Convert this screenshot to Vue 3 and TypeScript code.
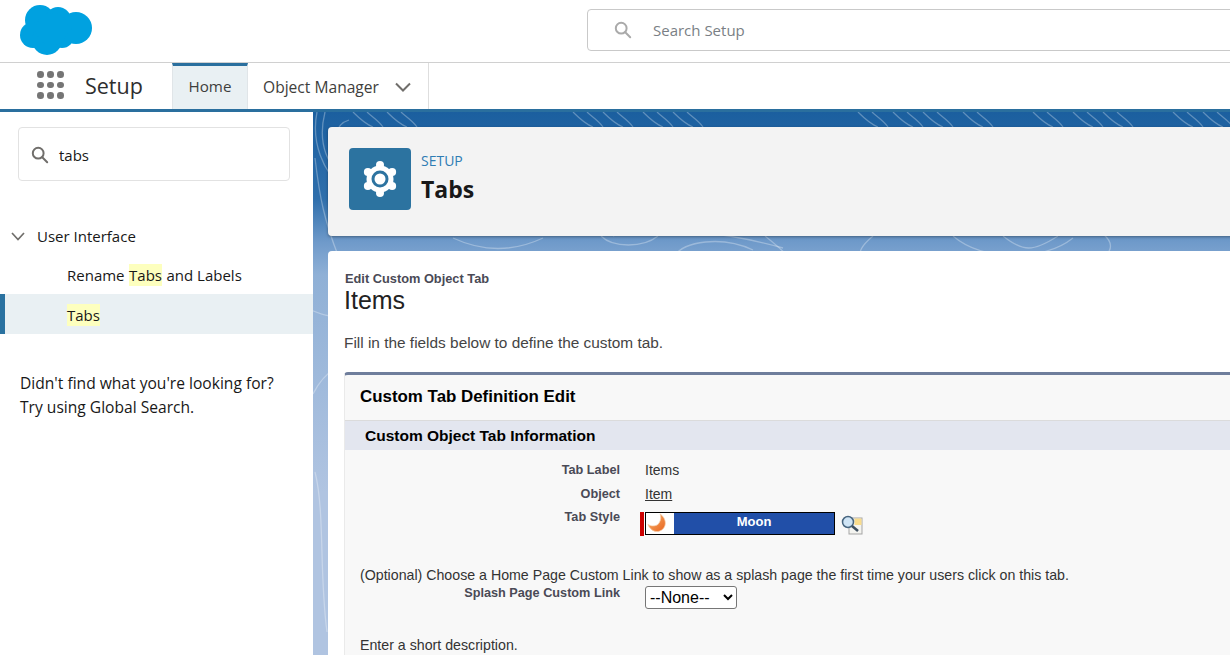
<template>
  <div class="page">
    <header class="topbar">
      <svg class="logo" viewBox="0 0 72 50" width="72" height="50" aria-label="Salesforce">
        <circle v-for="(c, i) in cloud" :key="i" :cx="c[0]" :cy="c[1]" :r="c[2]" fill="#00a1e0" />
      </svg>
      <div class="global-search">
        <svg viewBox="0 0 20 20" width="18" height="18" fill="none" stroke="#aaa" stroke-width="2.2">
          <circle cx="8" cy="8" r="6" />
          <path d="M12.5 12.5 18 18" stroke-linecap="round" />
        </svg>
        <span>Search Setup</span>
      </div>
    </header>

    <nav class="navbar">
      <div class="apps" aria-hidden="true">
        <span v-for="n in 9" :key="n"></span>
      </div>
      <div class="app-name">Setup</div>
      <div class="tab tab--active">Home</div>
      <div class="tab tab--menu">
        Object Manager
        <svg viewBox="0 0 16 10" width="16" height="10" fill="none" stroke="#706e6b" stroke-width="2">
          <path d="M1 1.5 8 8.5 15 1.5" />
        </svg>
      </div>
    </nav>

    <div class="body">
      <aside class="sidebar">
        <div class="quickfind">
          <svg viewBox="0 0 20 20" width="18" height="18" fill="none" stroke="#706e6b" stroke-width="2.2">
            <circle cx="8" cy="8" r="6" />
            <path d="M12.5 12.5 18 18" stroke-linecap="round" />
          </svg>
          <span>tabs</span>
        </div>
        <div class="tree-head">
          <svg viewBox="0 0 14 9" width="14" height="9" fill="none" stroke="#706e6b" stroke-width="1.7">
            <path d="M1 1 7 7.5 13 1" />
          </svg>
          User Interface
        </div>
        <div class="tree-item tree-item--plain">Rename <mark>Tabs</mark> and Labels</div>
        <div class="tree-item tree-item--active"><mark>Tabs</mark></div>
        <p class="hint">Didn't find what you're looking for?<br />Try using Global Search.</p>
      </aside>

      <main class="main">
        <svg class="topo" viewBox="0 0 917 544" width="917" height="544" fill="none" stroke="#fff" stroke-opacity=".3" stroke-width="1.3" aria-hidden="true">
          <path v-for="(d, i) in contours" :key="i" :d="d" />
        </svg>

        <section class="page-head">
          <div class="page-icon">
            <svg viewBox="0 0 36 36" width="36" height="36">
              <circle v-for="(t, i) in teeth" :key="i" :cx="t[0]" :cy="t[1]" r="4" fill="#fff" />
              <circle cx="18" cy="18" r="13.500" fill="#fff" />
              <circle cx="18" cy="18" r="8.500" fill="#2c73a0" />
              <circle cx="18" cy="18" r="5.500" fill="#fff" />
            </svg>
          </div>
          <div>
            <div class="crumb">SETUP</div>
            <h1 class="page-title">Tabs</h1>
          </div>
        </section>

        <section class="content">
          <div class="sub-title">Edit Custom Object Tab</div>
          <h2 class="item-title">Items</h2>
          <p class="intro">Fill in the fields below to define the custom tab.</p>

          <div class="block">
            <div class="block-title">Custom Tab Definition Edit</div>
            <div class="section-bar">Custom Object Tab Information</div>

            <div class="field field--first">
              <label>Tab Label</label>
              <div>Items</div>
            </div>
            <div class="field">
              <label>Object</label>
              <div><u>Item</u></div>
            </div>
            <div class="field field--style">
              <label>Tab Style</label>
              <div class="style-pick">
                <i class="required"></i>
                <div class="swatch">
                  <span class="swatch-icon">
                    <svg viewBox="0 0 24 24" width="21" height="21">
                      <defs>
                        <linearGradient id="moon" x1="0" y1="0" x2="1" y2="1">
                          <stop offset="0" stop-color="#f9b56e" />
                          <stop offset="1" stop-color="#e8641f" />
                        </linearGradient>
                      </defs>
                      <path d="M15 1C21 5 23 13 18.500 18 13 23.500 5 22 1 13 6 16 12 15 14 11 16 8 16 4 15 1Z" fill="url(#moon)" stroke="#f7cda8" stroke-width=".8" />
                    </svg>
                  </span>
                  <span class="swatch-name">Moon</span>
                </div>
                <svg class="lookup" viewBox="0 0 22 20" width="22" height="20">
                  <rect x="8" y="3" width="13" height="16" fill="#f4f4f0" stroke="#a5a5a5" />
                  <rect x="13.500" y="3.500" width="7" height="6.500" fill="#f9dc8c" />
                  <circle cx="7" cy="7" r="5.500" fill="#cfe4f5" stroke="#47657f" stroke-width="1.500" />
                  <path d="M11 11 17 16" stroke="#3e4f5f" stroke-width="2.500" />
                </svg>
              </div>
            </div>

            <p class="note note--splash">(Optional) Choose a Home Page Custom Link to show as a splash page the first time your users click on this tab.</p>
            <div class="field field--splash">
              <label>Splash Page Custom Link</label>
              <select class="splash-select">
                <option>--None--</option>
              </select>
            </div>
            <p class="note note--desc">Enter a short description.</p>
          </div>
        </section>
      </main>
    </div>
  </div>
</template>

<script setup lang="ts">
const cloud: [number, number, number][] = [
  [20, 15, 15],
  [38, 15, 13],
  [56, 23, 16],
  [13, 30, 13],
  [27, 35, 15],
  [42, 31, 12],
  [32, 24, 16],
]

const teeth = [0, 60, 120, 180, 240, 300].map((deg) => {
  const a = (deg * Math.PI) / 180
  return [18 + 14 * Math.sin(a), 18 - 14 * Math.cos(a)]
})

// hatch groups along the top strip, then the looser loops below the header card
const hatch = [40, 74, 260, 290, 330, 360, 545, 580, 610, 650, 720, 760, 790, 860, 890]
const contours = [
  ...hatch.map((x) => `M${x} 0C${x + 6} 6 ${x + 12} 12 ${x + 20} 15`),
  ...hatch.map((x) => `M${x + 30} 15C${x + 26} 9 ${x + 18} 4 ${x + 14} 0`),
  'M4 0C-2 30 10 60 30 76',
  'M12 0C6 24 10 44 24 60',
  'M36 8C22 12 18 30 26 44',
  'M2 46C6 80 10 110 32 160',
  'M-2 198C12 204 20 206 32 202',
  'M0 282C10 262 30 244 50 258 70 272 90 262 100 250',
  'M140 126C170 140 200 140 230 126',
  'M288 124C300 136 330 136 345 124',
  'M300 124C340 110 420 122 470 136',
  'M360 146C370 128 410 124 440 138',
  'M452 124C462 132 470 138 480 150',
  'M560 124C548 134 545 140 547 150',
  'M640 124C670 150 730 150 760 126',
  'M690 124C710 140 720 140 745 124',
  'M790 122C800 130 800 138 790 146',
  'M2 360C12 400 6 460 14 520',
]
</script>

<style>
html,
body {
  margin: 0;
  background: #fff;
}
</style>

<style scoped>
.page {
  width: 1230px;
  height: 655px;
  overflow: hidden;
  font-family: "Open Sans", "Noto Sans", sans-serif;
  color: #16325c;
  background: #fff;
}

.topbar {
  display: flex;
  align-items: flex-start;
  height: 62px;
  border-bottom: 1px solid #d0d0d0;
}

.logo {
  flex: none;
  margin: 5px 0 0 20px;
}

.global-search {
  flex: none;
  display: flex;
  align-items: center;
  gap: 21px;
  box-sizing: border-box;
  width: 800px;
  height: 42px;
  margin: 9px 0 0 495px;
  padding-left: 26px;
  border: 1px solid #c9c9c9;
  border-radius: 4px;
  color: #7a7f85;
  font-size: 15px;
}

.navbar {
  display: flex;
  align-items: stretch;
  box-sizing: border-box;
  height: 49px;
  border-bottom: 3px solid #2a6f9e;
}

.apps {
  flex: none;
  display: grid;
  grid-template-columns: repeat(3, 6px);
  gap: 4px;
  align-content: center;
  margin-left: 37px;
  margin-bottom: 2px;
}

.apps span {
  width: 6.500px;
  height: 6.500px;
  border-radius: 50%;
  background: #757575;
}

.app-name {
  flex: none;
  width: 87px;
  margin-left: 22px;
  color: #2e2e2e;
  font-size: 21.500px;
  line-height: 46px;
}

.tab {
  flex: none;
  display: flex;
  align-items: center;
  box-sizing: border-box;
  color: #3e3e3c;
}

.tab--active {
  justify-content: center;
  width: 76px;
  padding-bottom: 3px;
  border-top: 3px solid #2a6f9e;
  border-right: 1px solid #e0e5e8;
  border-left: 1px solid #e0e5e8;
  background: #e9f0f3;
  font-size: 15.200px;
}

.tab--menu {
  justify-content: space-between;
  width: 181px;
  padding: 1px 17px 0 15px;
  border-right: 1px solid #dedede;
  font-size: 15.600px;
}

.body {
  display: flex;
  height: 543px;
}

.sidebar {
  flex: none;
  width: 313px;
  color: #181818;
  font-size: 15px;
}

.quickfind {
  display: flex;
  align-items: center;
  gap: 10px;
  box-sizing: border-box;
  width: 272px;
  height: 54px;
  margin: 15px 0 0 18px;
  padding: 2px 0 0 12px;
  border: 1px solid #e2e2e2;
  border-radius: 4px;
}

.tree-head {
  display: flex;
  align-items: center;
  gap: 12px;
  height: 40px;
  margin-top: 35px;
  padding-left: 11px;
}

.tree-item {
  display: flex;
  align-items: center;
  gap: 0.3em;
  height: 40px;
  padding-left: 67px;
}

.tree-item--plain {
  height: 38px;
}

.tree-item mark {
  padding: 1px 0;
  color: inherit;
  background: #fdffbe;
}

.tree-item--active {
  box-sizing: border-box;
  padding: 2px 0 0 62px;
  border-left: 5px solid #2a72a0;
  background: #e9f0f3;
}

.hint {
  margin: 37px 0 0 20px;
  font-size: 15.600px;
  line-height: 24px;
}

.main {
  position: relative;
  flex: 1;
  min-width: 0;
  overflow: hidden;
  padding: 15px 0 0 15px;
  background: linear-gradient(#1b5f9f 0, #2f6fac 16%, #6f9aca 24%, #8fb0d6 30%, #b0c4e1 70%, #b0c4e1 100%);
}

.topo {
  position: absolute;
  top: 0;
  left: 0;
}

.page-head {
  position: relative;
  display: flex;
  align-items: flex-start;
  gap: 10px;
  box-sizing: border-box;
  width: 1000px;
  height: 109px;
  padding: 21px 0 0 21px;
  border-radius: 4px;
  background: #f3f3f3;
  box-shadow: 0 1px 3px rgb(0 0 0 / 35%);
}

.page-icon {
  flex: none;
  display: grid;
  width: 62px;
  height: 62px;
  place-items: center;
  border-radius: 4px;
  background: #2c73a0;
}

.crumb {
  color: #2f7cb3;
  font-size: 14px;
  line-height: 26px;
}

.page-title {
  margin: 0;
  color: #181818;
  font-size: 23px;
  font-weight: 700;
  line-height: 30px;
}

.content {
  position: relative;
  box-sizing: border-box;
  width: 1000px;
  height: 500px;
  margin-top: 15px;
  padding: 21px 0 0 16px;
  border-radius: 4px;
  background: #fff;
  font-family: "Liberation Sans", Arial, sans-serif;
}

.sub-title {
  margin-left: 1px;
  color: #4a4a56;
  font-size: 12.800px;
  font-weight: 700;
  line-height: 14px;
}

.item-title {
  margin: 0;
  color: #222;
  font-size: 25px;
  font-weight: 400;
  line-height: 28px;
}

.intro {
  margin: 19px 0 0;
  color: #444;
  font-size: 15.400px;
  line-height: 20px;
}

.block {
  box-sizing: border-box;
  height: 320px;
  margin-top: 19px;
  border-top: 3px solid #6f7e9c;
  border-left: 1px solid #eaeaea;
  border-radius: 4px 0 0 0;
  background: #f8f8f8;
  color: #333;
  font-size: 14px;
}

.block-title {
  box-sizing: border-box;
  height: 46px;
  padding-left: 15px;
  border-bottom: 1px solid #dbdbdb;
  color: #000;
  font-size: 16.900px;
  font-weight: 700;
  line-height: 43px;
}

.section-bar {
  height: 29px;
  padding-left: 20px;
  background: #e3e6ef;
  color: #000;
  font-size: 15.500px;
  font-weight: 700;
  line-height: 29px;
}

.field {
  display: flex;
  gap: 25px;
  min-height: 24px;
  line-height: 24px;
}

.field label {
  flex: none;
  width: 275px;
  color: #4a4a56;
  font-size: 12.700px;
  font-weight: 700;
  text-align: right;
}

.field--first {
  margin-top: 8px;
}

.field--style {
  margin-top: -1px;
}

.style-pick {
  position: relative;
  display: flex;
  align-items: center;
  gap: 6px;
  margin-top: 7px;
}

.required {
  position: absolute;
  top: 0;
  left: -5px;
  width: 4px;
  height: 24px;
  background: #c00;
}

.swatch {
  display: flex;
  box-sizing: border-box;
  width: 190px;
  height: 23px;
  border: 1px solid #000;
}

.swatch-icon {
  flex: none;
  display: flex;
  align-items: center;
  width: 28px;
  padding-left: 1px;
  box-sizing: border-box;
  overflow: hidden;
  background: #fff;
}

.swatch-name {
  flex: 1;
  background: #214fa8;
  color: #fff;
  font-size: 13px;
  font-weight: 700;
  line-height: 17px;
  text-align: center;
}

.lookup {
  margin-top: 3px;
}

.note {
  margin: 0;
  padding-left: 15px;
  color: #333;
  font-size: 14.200px;
  line-height: 20px;
}

.note--splash {
  margin-top: 30px;
}

.field--splash {
  margin-top: 0;
}

.field--splash label {
  line-height: 16px;
}

.splash-select {
  box-sizing: border-box;
  width: 92px;
  height: 23px;
  margin-top: 1px;
  border: 1px solid #767676;
  border-radius: 3px;
  background: #fff;
  color: #000;
  font-family: "Liberation Sans", Arial, sans-serif;
  font-size: 16px;
}

.note--desc {
  margin-top: 26px;
}
</style>
